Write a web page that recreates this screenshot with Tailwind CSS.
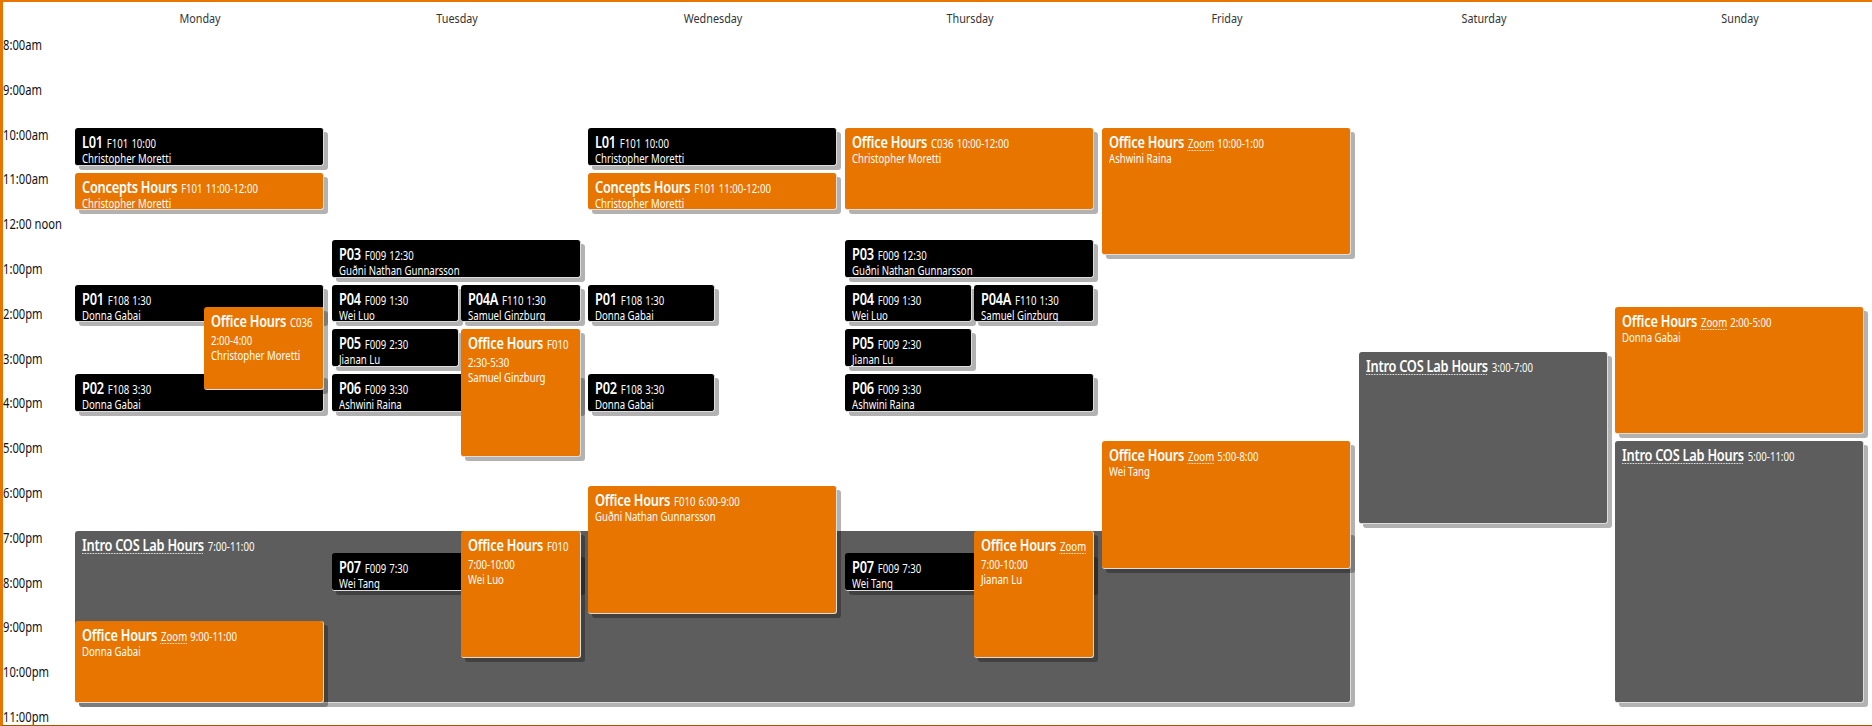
<!DOCTYPE html>
<html lang="en">
<head>
    <meta charset="UTF-8">
    <title>Weekly Schedule</title>
    <script src="https://cdn.jsdelivr.net/npm/@tailwindcss/browser@4"></script>
</head>
<body class="bg-white overflow-hidden font-['Noto_Sans','Liberation_Sans',sans-serif] text-[#222]">
    <div class="relative w-[1872px] h-[726px] overflow-hidden border-t-2 border-l-[3px] border-b border-t-[#e87500] border-l-[#e87500] border-b-[#a85200]">
        <!-- day headers -->
        <div class="flex h-[34px] pl-[72px] items-center text-[13px] text-[#333]">
            <div class="w-[256.8px] text-center pr-[8px] scale-x-[0.83]">Monday</div>
            <div class="w-[256.8px] text-center pr-[8px] scale-x-[0.83]">Tuesday</div>
            <div class="w-[256.8px] text-center pr-[8px] scale-x-[0.83]">Wednesday</div>
            <div class="w-[256.8px] text-center pr-[8px] scale-x-[0.83]">Thursday</div>
            <div class="w-[256.8px] text-center pr-[8px] scale-x-[0.83]">Friday</div>
            <div class="w-[256.8px] text-center pr-[8px] scale-x-[0.83]">Saturday</div>
            <div class="w-[256.8px] text-center pr-[8px] scale-x-[0.83]">Sunday</div>
        </div>
        <!-- hour labels -->
        <div class="flex flex-col text-[14px] text-[#111] leading-[18px] origin-left scale-x-[0.8]">
            <div class="h-[44.8px]">8:00am</div>
            <div class="h-[44.8px]">9:00am</div>
            <div class="h-[44.8px]">10:00am</div>
            <div class="h-[44.8px]">11:00am</div>
            <div class="h-[44.8px]">12:00 noon</div>
            <div class="h-[44.8px]">1:00pm</div>
            <div class="h-[44.8px]">2:00pm</div>
            <div class="h-[44.8px]">3:00pm</div>
            <div class="h-[44.8px]">4:00pm</div>
            <div class="h-[44.8px]">5:00pm</div>
            <div class="h-[44.8px]">6:00pm</div>
            <div class="h-[44.8px]">7:00pm</div>
            <div class="h-[44.8px]">8:00pm</div>
            <div class="h-[44.8px]">9:00pm</div>
            <div class="h-[44.8px]">10:00pm</div>
            <div class="h-[44.8px]">11:00pm</div>
        </div>
        <div id="events"></div>
    </div>

    <script>
        const colX = [72, 329, 585, 842, 1099, 1356, 1612];
        const colW = 249;
        const pitch = 44.8;
        const styles = {
            lab: 'bg-[#5d5d5d]',
            precept: 'bg-black',
            office: 'bg-[#e87500]'
        };

        // kind, title, place, time, who, day, start, hours, left, width
        const events = [
            ['lab', 'Intro COS Lab Hours', '', '7:00-11:00', '', 0, 19, 4, 0, 1276],
            ['lab', 'Intro COS Lab Hours', '', '3:00-7:00', '', 5, 15, 4],
            ['lab', 'Intro COS Lab Hours', '', '5:00-11:00', '', 6, 17, 6],
            ['precept', 'L01', 'F101', '10:00', 'Christopher Moretti', 0, 10, 1],
            ['office', 'Concepts Hours', 'F101', '11:00-12:00', 'Christopher Moretti', 0, 11, 1],
            ['precept', 'P01', 'F108', '1:30', 'Donna Gabai', 0, 13.5, 1],
            ['precept', 'P02', 'F108', '3:30', 'Donna Gabai', 0, 15.5, 1],
            ['office', 'Office Hours', 'C036', '2:00-4:00', 'Christopher Moretti', 0, 14, 2, 129, 120],
            ['office', 'Office Hours', 'Zoom', '9:00-11:00', 'Donna Gabai', 0, 21, 2],
            ['precept', 'P03', 'F009', '12:30', 'Guðni Nathan Gunnarsson', 1, 12.5, 1],
            ['precept', 'P04', 'F009', '1:30', 'Wei Luo', 1, 13.5, 1, 0, 127],
            ['precept', 'P04A', 'F110', '1:30', 'Samuel Ginzburg', 1, 13.5, 1, 129, 120],
            ['precept', 'P05', 'F009', '2:30', 'Jianan Lu', 1, 14.5, 1, 0, 127],
            ['precept', 'P06', 'F009', '3:30', 'Ashwini Raina', 1, 15.5, 1],
            ['precept', 'P07', 'F009', '7:30', 'Wei Tang', 1, 19.5, 1],
            ['office', 'Office Hours', 'F010', '2:30-5:30', 'Samuel Ginzburg', 1, 14.5, 3, 129, 120],
            ['office', 'Office Hours', 'F010', '7:00-10:00', 'Wei Luo', 1, 19, 3, 129, 120],
            ['precept', 'L01', 'F101', '10:00', 'Christopher Moretti', 2, 10, 1],
            ['office', 'Concepts Hours', 'F101', '11:00-12:00', 'Christopher Moretti', 2, 11, 1],
            ['precept', 'P01', 'F108', '1:30', 'Donna Gabai', 2, 13.5, 1, 0, 127],
            ['precept', 'P02', 'F108', '3:30', 'Donna Gabai', 2, 15.5, 1, 0, 127],
            ['office', 'Office Hours', 'F010', '6:00-9:00', 'Guðni Nathan Gunnarsson', 2, 18, 3],
            ['office', 'Office Hours', 'C036', '10:00-12:00', 'Christopher Moretti', 3, 10, 2],
            ['precept', 'P03', 'F009', '12:30', 'Guðni Nathan Gunnarsson', 3, 12.5, 1],
            ['precept', 'P04', 'F009', '1:30', 'Wei Luo', 3, 13.5, 1, 0, 127],
            ['precept', 'P04A', 'F110', '1:30', 'Samuel Ginzburg', 3, 13.5, 1, 129, 120],
            ['precept', 'P05', 'F009', '2:30', 'Jianan Lu', 3, 14.5, 1, 0, 127],
            ['precept', 'P06', 'F009', '3:30', 'Ashwini Raina', 3, 15.5, 1],
            ['precept', 'P07', 'F009', '7:30', 'Wei Tang', 3, 19.5, 1],
            ['office', 'Office Hours', 'Zoom', '7:00-10:00', 'Jianan Lu', 3, 19, 3, 129, 120],
            ['office', 'Office Hours', 'Zoom', '10:00-1:00', 'Ashwini Raina', 4, 10, 3],
            ['office', 'Office Hours', 'Zoom', '5:00-8:00', 'Wei Tang', 4, 17, 3],
            ['office', 'Office Hours', 'Zoom', '2:00-5:00', 'Donna Gabai', 6, 14, 3]
        ];

        let html = '';
        for (const [kind, title, place, time, who, day, start, hours, left = 0, width = colW] of events) {
            const titleHtml = kind === 'lab'
                ? `<span class="underline decoration-dotted decoration-1 underline-offset-2">${title}</span>`
                : title;
            const placeHtml = place === 'Zoom'
                ? `<span class="underline decoration-dotted decoration-1 underline-offset-2">Zoom</span>`
                : place;
            html += `<div class="absolute rounded-[3px] border-r border-b border-[#ddd] shadow-[4px_4px_0_rgba(0,0,0,0.3)] text-white pl-[7px] pr-[2px] pt-[6px] overflow-hidden ${styles[kind]}"
                style="left:${colX[day] + left}px;top:${125.8 + (start - 10) * pitch}px;width:${width}px;height:${hours * pitch - 7}px">
                <div class="w-[125%] origin-left scale-x-[0.8]">
                    <div class="font-semibold text-[16px] tracking-[-0.3px] leading-[17px]">${titleHtml} <span class="font-normal text-[12px] tracking-normal ml-[1px]">${placeHtml}</span> <span class="font-normal text-[12px] tracking-normal whitespace-nowrap">${time}</span></div>
                    <div class="text-[12px] leading-[14px]">${who}</div>
                </div>
            </div>`;
        }
        document.getElementById('events').innerHTML = html;
    </script>
</body>
</html>
